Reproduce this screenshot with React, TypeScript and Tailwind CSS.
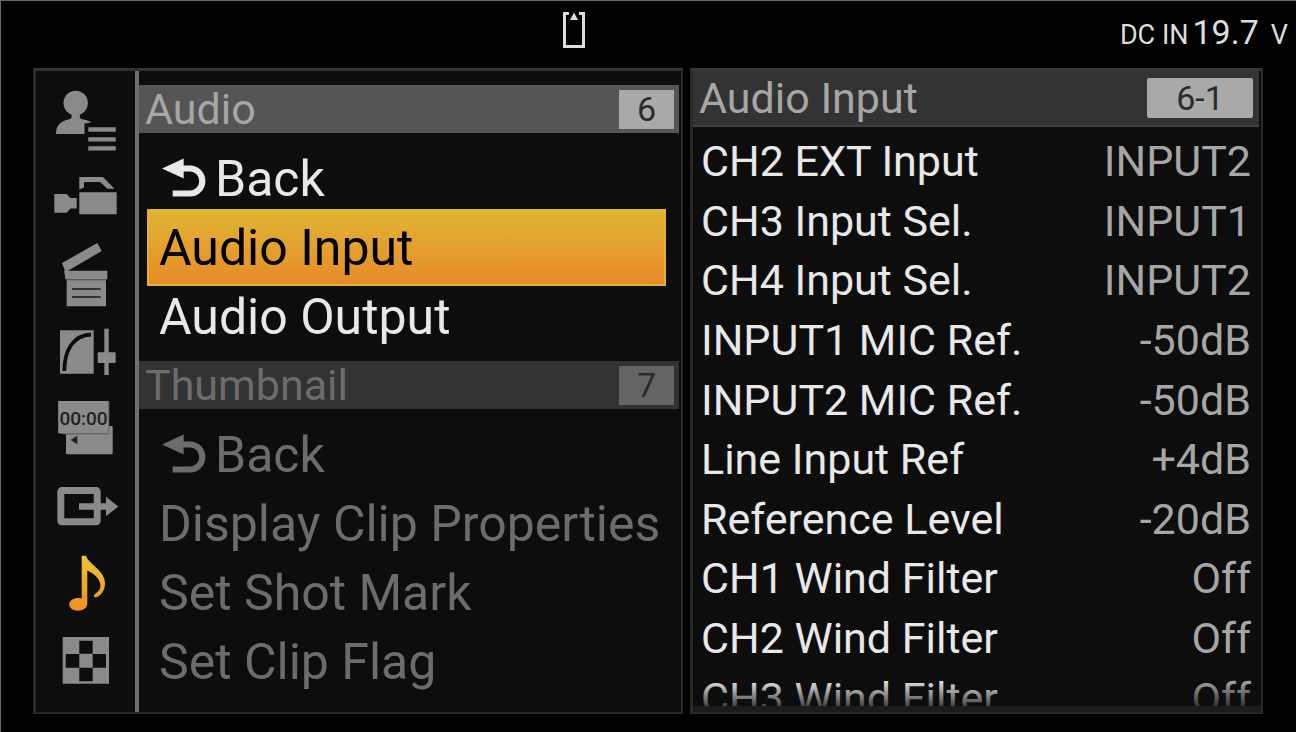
import { useState } from "react";
import type { ReactNode } from "react";

type MenuGroup = {
  title: string;
  number: string;
  items: string[];
};

const MENU: MenuGroup[] = [
  { title: "Audio", number: "6", items: ["Audio Input", "Audio Output"] },
  {
    title: "Thumbnail",
    number: "7",
    items: ["Display Clip Properties", "Set Shot Mark", "Set Clip Flag"],
  },
];

const SETTINGS = [
  { name: "CH2 EXT Input", value: "INPUT2" },
  { name: "CH3 Input Sel.", value: "INPUT1" },
  { name: "CH4 Input Sel.", value: "INPUT2" },
  { name: "INPUT1 MIC Ref.", value: "-50dB" },
  { name: "INPUT2 MIC Ref.", value: "-50dB" },
  { name: "Line Input Ref", value: "+4dB" },
  { name: "Reference Level", value: "-20dB" },
  { name: "CH1 Wind Filter", value: "Off" },
  { name: "CH2 Wind Filter", value: "Off" },
  { name: "CH3 Wind Filter", value: "Off" },
];

// Category icons share one 66x66 grid and take their colour from the button.
const CATEGORIES: { label: string; icon: ReactNode }[] = [
  {
    label: "User",
    icon: (
      <>
        <circle cx="22.7" cy="15" r="12.2" />
        <path d="M3 46C3 37 8 32.5 17.5 31C19 29.5 19 27 18 25H27.500C26.500 27 26.500 29.500 28 31C32 31.500 36 32.500 38.500 34.500L31.500 35.500V46Z" />
        <path d="M35.3 39.300h27.400v4.400H35.300zM35.300 49.200h27.400v4.400H35.300zM35.300 58.200h27.400v4.400H35.300z" />
      </>
    ),
  },
  {
    label: "Camera",
    icon: (
      <>
        <path d="M26.300 27.300h37.400v22H26.300z" />
        <path d="M26.300 12H50L61.500 23.700H54.500L47 17H31V22.500L26.300 24.500Z" />
        <path d="M1.300 29H13.700L17.500 33H23.700V43.500H17.500L13.700 47.700H1.300Z" />
      </>
    ),
  },
  {
    label: "Shooting",
    icon: (
      <>
        <path d="M9 21L44.300 1L48.700 9L18 27L12.500 30Z" />
        <path d="M11 28.700H54.300V37.300H12.500Z" />
        <path d="M13.700 38h39.300v26.300H13.700z" />
        <path d="M13 37.300h40v1.200H13z" fill="#666" />
        <path d="M19 46h28.700v2H19zM19 54h28.700v2H19z" fill="#333" />
      </>
    ),
  },
  {
    label: "Paint",
    icon: (
      <>
        <path d="M7 11.300h33.700v43.400H7z" />
        <path d="M11.300 52C11.500 31 20 16.500 38 15.500" fill="none" stroke="#0d0d0d" strokeWidth="3.800" />
        <path d="M51.300 9.700h4.400v46.300h-4.400z" />
        <rect x="44.700" y="33.300" width="18" height="10.700" rx="1" />
      </>
    ),
  },
  {
    label: "Time code",
    icon: (
      <>
        <rect x="13" y="30" width="46.700" height="28.300" rx="1" />
        <path d="M5.300 5h51v33.500H12L5.300 37.300Z" fill="#666" />
        <path d="M5.300 5h50v32H5.300z" />
        <path d="M17.500 44L24.300 39.700V48.300Z" fill="#222" />
        <text x="30.500" y="28.500" textAnchor="middle" fill="#222" className="text-[19px] font-medium">
          00:00
        </text>
      </>
    ),
  },
  {
    label: "Monitoring",
    icon: (
      <>
        <rect x="7.800" y="17.600" width="36.400" height="31.200" rx="1" fill="none" stroke="currentColor" strokeWidth="7" />
        <path d="M26 30.300H53V23.700L65.300 33.500L53 43.300V36.700H26Z" />
      </>
    ),
  },
  {
    label: "Audio",
    icon: (
      <g fill="url(#note)">
        <path d="M28.700 5.700H33C36 15 52 20 52 33.500C52 41 47 47 42 47.500C40.500 46.500 40.500 45 42 44C47 41 48.200 37 47 33C45 26 39 23 34.300 20.500V54C34.300 58 29.500 60.700 25 60.700C20 60.700 16.300 58 16.300 54.500C16.300 50.500 20.500 48 25 48C26.500 48 28 48.200 28.700 48.500Z" />
      </g>
    ),
  },
  {
    label: "Thumbnail",
    icon: (
      <>
        <path d="M9.700 10h46.300v46.700H9.700z" />
        <path
          d="M26.300 13.700h13.400v13h-13.400zM12.700 27h13.600v13.700H12.700zM39.700 27h13.300v13.700H39.700zM26.300 40.700h13.400v13.600h-13.400z"
          fill="#0d0d0d"
        />
      </>
    ),
  },
];

function BackIcon() {
  return (
    <svg viewBox="-3 0 48 42" className="h-[42px] w-12 shrink-0" aria-hidden="true">
      <path d="M0 10.500L21.700 0.500V20.500Z" fill="currentColor" />
      <path d="M19 10.500H28A12.300 12.500 0 0 1 28 35.500H10.700" fill="none" stroke="currentColor" strokeWidth="6.200" />
    </svg>
  );
}

function StatusBar() {
  return (
    <header className="flex h-[67px] shrink-0 items-start pr-2">
      <svg viewBox="0 0 24 38" className="mt-[10px] ml-[43.6%] h-[38px] w-6" role="img" aria-label="Memory card">
        <path d="M7 2.500H2.500V35.500H21.500V2.500H17" fill="none" stroke="#ddd" strokeWidth="3" />
        <path d="M12 1.500L16 9H8Z" fill="#ddd" />
      </svg>
      <p className="mt-[11px] ml-auto flex items-baseline leading-10 text-[#dcdcdc]">
        <span className="text-[27px]">DC IN</span>
        <span className="ml-1 text-[34px]">19.7</span>
        <span className="ml-3 text-[27px]">V</span>
      </p>
    </header>
  );
}

function CategoryBar({ active, onSelect }: { active: string; onSelect: (label: string) => void }) {
  return (
    <nav className="flex w-[103px] shrink-0 flex-col border-r-4 border-[#6e6e6e] pt-[11px]" aria-label="Categories">
      {CATEGORIES.map((c) => (
        <button
          key={c.label}
          type="button"
          aria-label={c.label}
          aria-current={c.label === active}
          onClick={() => onSelect(c.label)}
          className="flex h-[77px] shrink-0 items-center justify-center text-[#8a8a8a]"
        >
          <svg viewBox="0 0 66 66" className="size-[66px]" fill="currentColor" aria-hidden="true">
            <defs>
              <linearGradient id="note" x1="0" y1="0" x2="0" y2="1">
                <stop offset="0" stopColor="#ecc535" />
                <stop offset="1" stopColor="#f08f24" />
              </linearGradient>
            </defs>
            {c.icon}
          </svg>
        </button>
      ))}
    </nav>
  );
}

function MenuSection({
  group,
  enabled,
  selected,
  onSelect,
}: {
  group: MenuGroup;
  enabled: boolean;
  selected: string;
  onSelect: (item: string) => void;
}) {
  return (
    <section className={enabled ? "text-[#e8e8e8]" : "text-[#6c6c6c]"}>
      <div
        className={
          enabled
            ? "mr-0.5 flex h-12 items-center justify-between bg-[#555] pr-[5px] pl-1.5 text-[#a6a6a6]"
            : "mr-0.5 flex h-12 items-center justify-between bg-[#333] pr-[5px] pl-1.5 text-[#6c6c6c]"
        }
      >
        <h2 className="text-[43px] leading-[46px]">{group.title}</h2>
        <span
          className={
            enabled
              ? "flex h-[39px] w-[55px] items-center justify-center bg-[#a9a9a9] text-[34px] text-[#2c2c2c]"
              : "flex h-[39px] w-[55px] items-center justify-center bg-[#646464] text-[34px] text-[#2c2c2c]"
          }
        >
          {group.number}
        </span>
      </div>
      <ul className="pt-[11px] pr-[15px] pb-[10px] pl-2 text-[50px] leading-none">
        <li>
          <button type="button" className="flex h-[69px] w-full items-center gap-2 pl-3 text-left">
            <BackIcon />
            Back
          </button>
        </li>
        {group.items.map((item) => (
          <li key={item}>
            <button
              type="button"
              onClick={() => onSelect(item)}
              className={
                item === selected
                  ? "-my-1 flex h-[77px] w-full items-center border-2 border-[#e0b42c] bg-linear-to-b from-[#e0b434] to-[#e68a28] pl-[10px] text-left whitespace-nowrap text-black"
                  : "flex h-[69px] w-full items-center pl-3 text-left whitespace-nowrap"
              }
            >
              {item}
            </button>
          </li>
        ))}
      </ul>
    </section>
  );
}

function SettingsPanel() {
  return (
    <section className="relative flex min-w-0 flex-col overflow-hidden border-t-3 border-r-2 border-b-2 border-l-3 border-[#292929] border-t-[#383838] bg-[#0d0d0d]">
      <div className="mr-0.5 flex h-[56px] shrink-0 items-center justify-between border-b-2 border-[#404040] bg-[#333] pr-1.5 pl-1.5">
        <h2 className="text-[43px] leading-[50px] text-[#a6a6a6]">Audio Input</h2>
        <span className="flex h-10 w-[106px] items-center justify-center rounded-xs bg-[#a9a9a9] text-[34px] text-[#2c2c2c]">
          6-1
        </span>
      </div>
      <div className="min-h-0 flex-1 overflow-hidden pt-[5px]">
        <ul className="grid h-[596px] auto-rows-fr text-[43px] leading-none">
          {SETTINGS.map((s) => (
            <li key={s.name} className="flex">
              <button type="button" className="flex flex-1 items-center justify-between pr-[10px] pl-2 whitespace-nowrap">
                <span className="text-[#e8e8e8]">{s.name}</span>
                <span className="text-[#a6a6a6]">{s.value}</span>
              </button>
            </li>
          ))}
        </ul>
      </div>
      <div className="pointer-events-none absolute inset-x-0 bottom-1 h-7 bg-linear-to-b from-transparent to-[#0d0d0d]/80" />
      <div className="absolute inset-x-0 bottom-0 h-1.5 bg-[#1c1c1c]" />
    </section>
  );
}

export default function App() {
  const [category, setCategory] = useState("Audio");
  const [selected, setSelected] = useState("Audio Input");

  return (
    <div className="flex h-screen flex-col overflow-hidden border-t border-l border-[#6a6a6a] bg-black pb-[18px] font-['Roboto',sans-serif]">
      <StatusBar />
      <main className="grid min-h-0 flex-1 grid-cols-[650fr_573fr] gap-[7px] pr-[33px] pl-8">
        <div className="flex min-w-0 overflow-hidden border-t-3 border-r-2 border-b-2 border-l-3 border-[#292929] border-t-[#333] bg-[#0d0d0d]">
          <CategoryBar active={category} onSelect={setCategory} />
          <div className="min-w-0 flex-1 overflow-hidden pt-[14px]">
            {MENU.map((group) => (
              <MenuSection
                key={group.title}
                group={group}
                enabled={group.title === category}
                selected={selected}
                onSelect={setSelected}
              />
            ))}
          </div>
        </div>
        <SettingsPanel />
      </main>
    </div>
  );
}
